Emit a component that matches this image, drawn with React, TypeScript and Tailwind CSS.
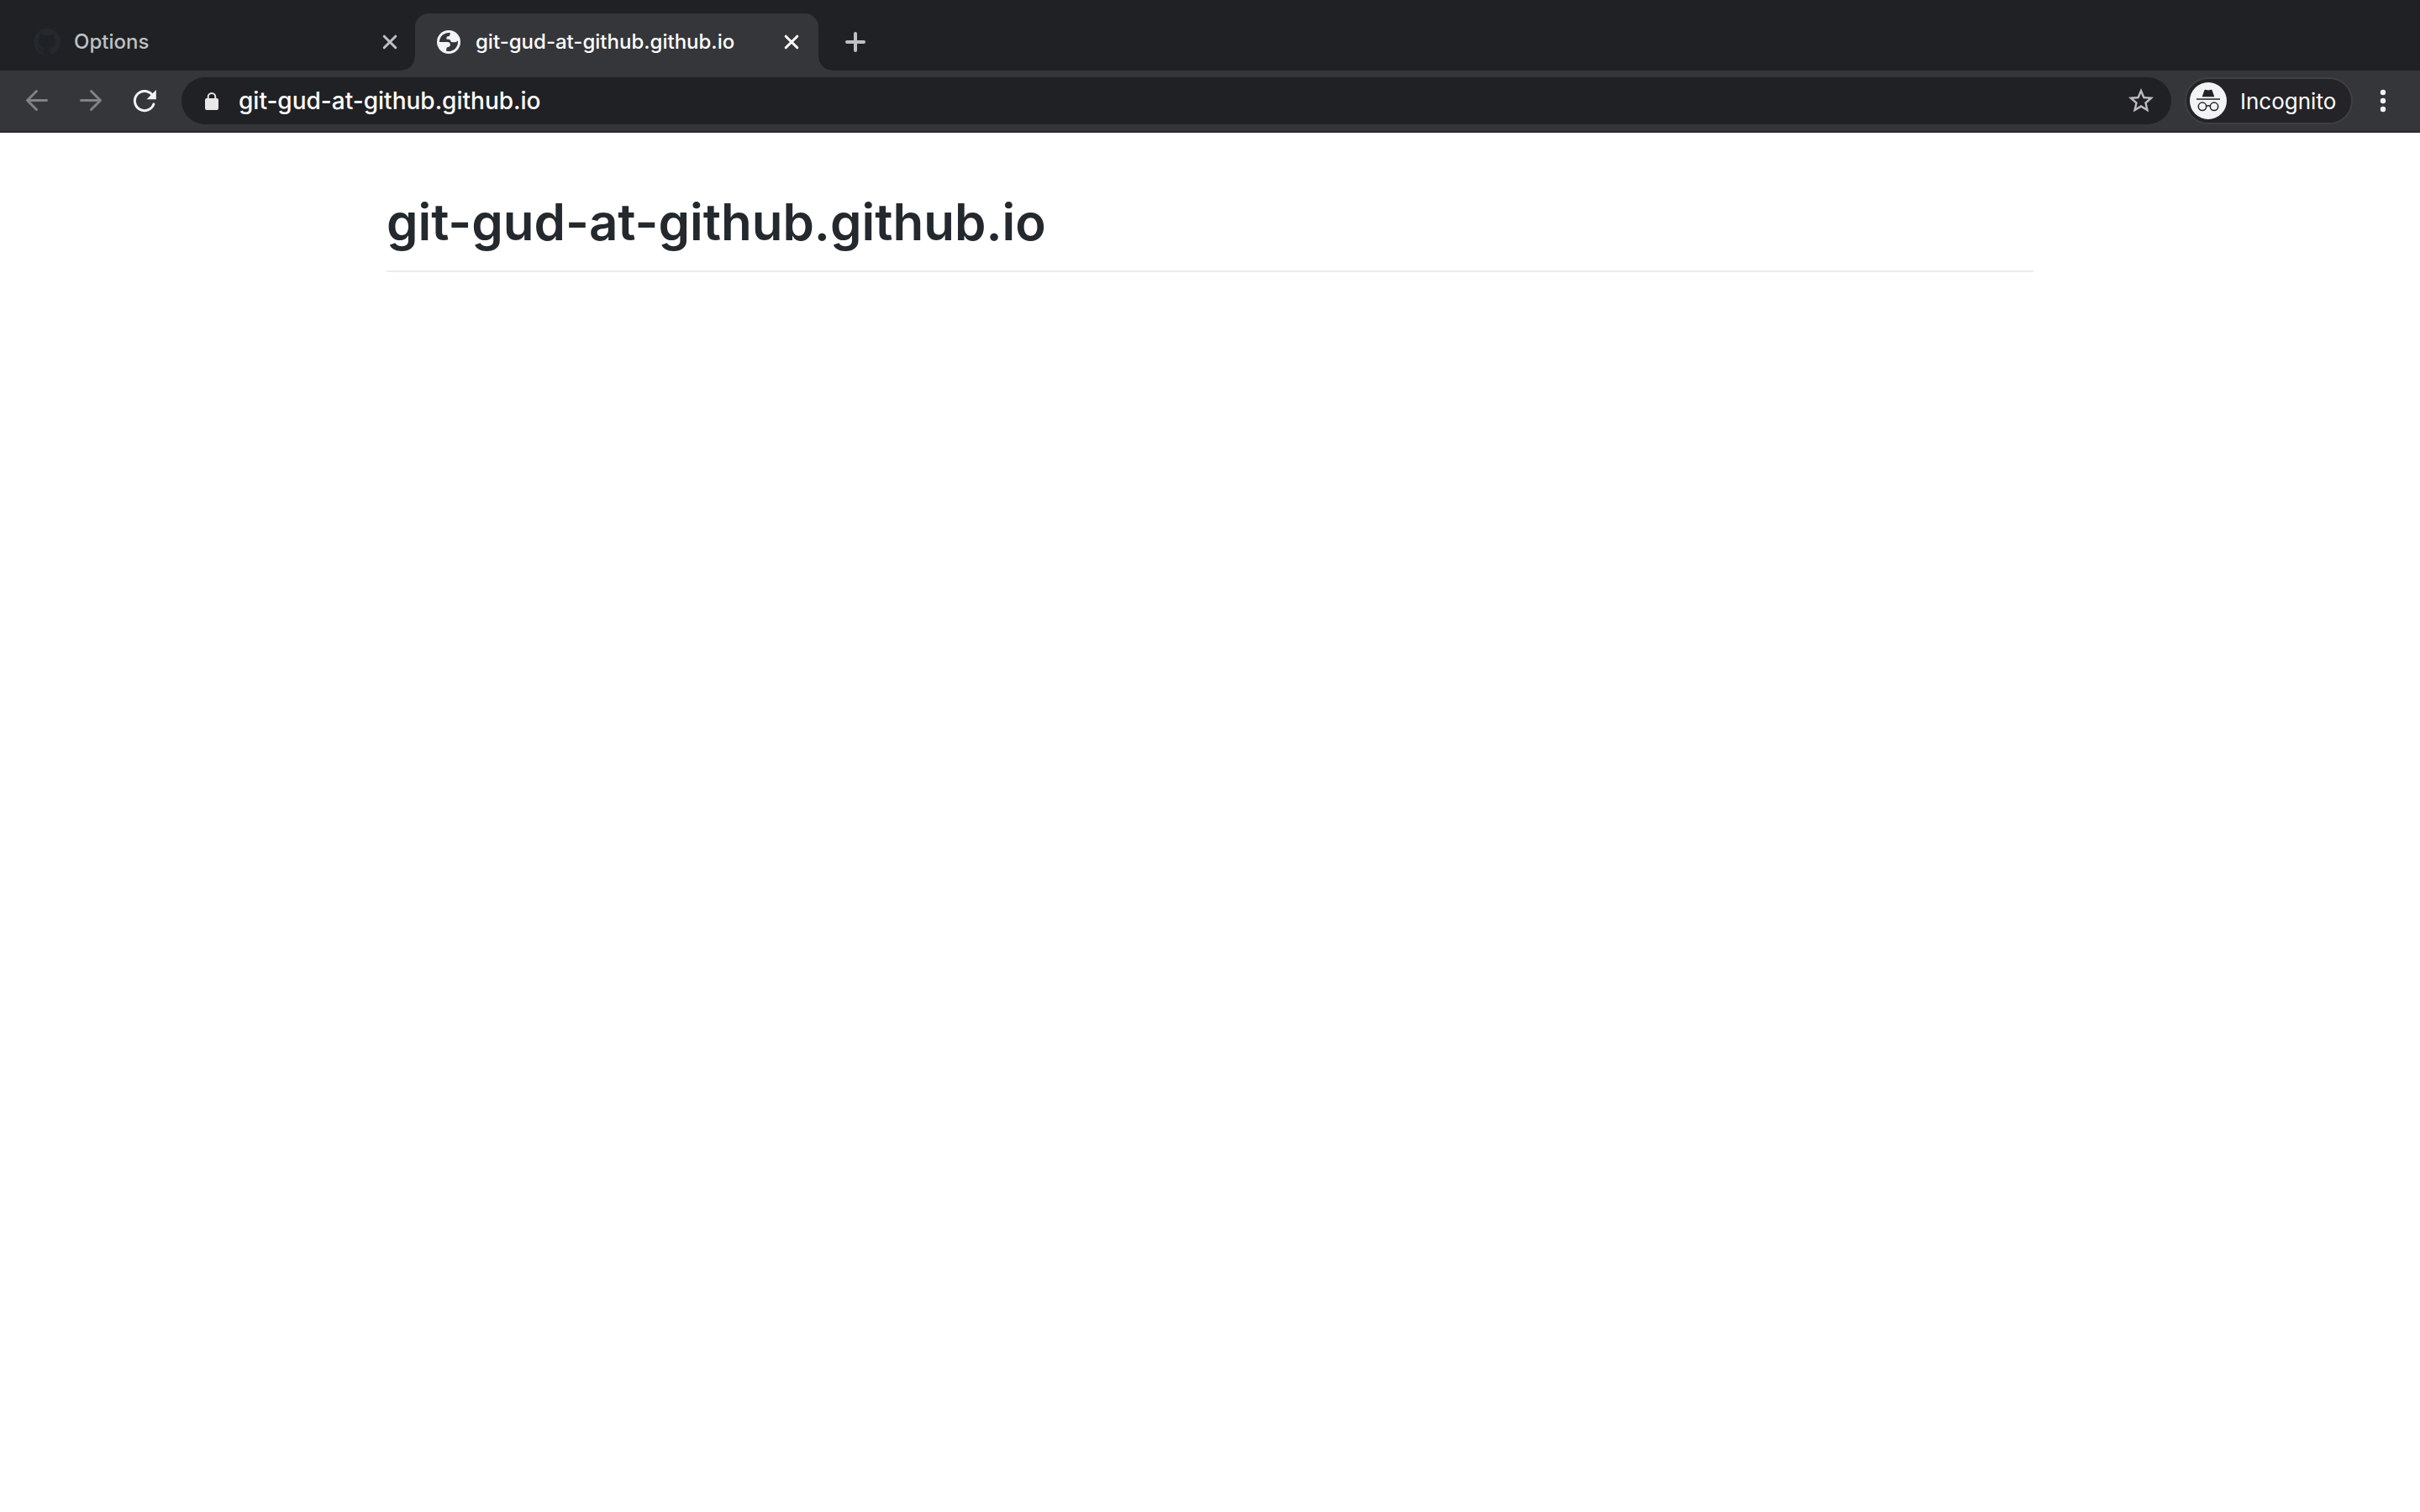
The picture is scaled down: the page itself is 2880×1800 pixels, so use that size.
import React from "react";

function CloseIcon() {
  return (
    <svg viewBox="0 0 20 20" className="size-5" fill="none" stroke="currentColor" strokeWidth="3" strokeLinecap="round" aria-hidden="true">
      <path d="M3.2 3.2 16.8 16.8M16.8 3.2 3.2 16.8" />
    </svg>
  );
}

function ArrowIcon({ flipped = false }: { flipped?: boolean }) {
  return (
    <svg viewBox="0 0 32 32" className="size-8" fill="none" stroke="currentColor" strokeWidth="3" strokeLinecap="round" strokeLinejoin="round" aria-hidden="true">
      <path d={flipped ? "M4.5 15.500H27M16.500 4.500 27.500 15.500 16.500 26.500" : "M27.500 15.500H5M15.500 4.500 4.500 15.500 15.500 26.500"} />
    </svg>
  );
}

function GithubIcon() {
  return (
    <svg viewBox="0 0 16 16" className="size-8 fill-[#24292e]" aria-hidden="true">
      <path d="M8 0C3.580 0 0 3.580 0 8c0 3.540 2.290 6.530 5.470 7.590.4.070.55-.17.55-.38 0-.19-.01-.82-.01-1.490-2.010.37-2.530-.49-2.690-.94-.09-.23-.48-.94-.82-1.130-.28-.15-.68-.52-.01-.53.63-.01 1.080.58 1.230.82.72 1.210 1.870.87 2.330.66.070-.52.28-.87.51-1.070-1.780-.2-3.640-.89-3.640-3.950 0-.87.31-1.590.82-2.150-.08-.2-.36-1.020.08-2.120 0 0 .67-.21 2.200.82.64-.18 1.320-.27 2-.27s1.360.09 2 .27c1.530-1.040 2.200-.82 2.200-.82.44 1.100.16 1.920.08 2.120.51.56.82 1.270.82 2.150 0 3.070-1.870 3.750-3.650 3.950.29.25.54.73.54 1.480 0 1.070-.01 1.930-.01 2.200 0 .21.15.46.55.38A8.010 8.010 0 0 0 16 8c0-4.420-3.580-8-8-8z" />
    </svg>
  );
}

function GlobeIcon() {
  return (
    <svg viewBox="0 0 32 32" className="size-8" aria-hidden="true">
      <circle cx="16" cy="16" r="14" fill="#f1f3f4" />
      <path
        d="M4.900 16A11.100 11.100 0 0 1 17.700 5.100V6.500Q17.500 9.200 15 9.300Q13.400 9.400 13.400 11V12.700H15.500Q18 12.800 18.300 14.800Q18.600 16.300 20.500 16.300H23.500Q25.600 16.200 26.900 14.200A11.100 11.100 0 0 1 13.200 26.700V24.200Q13.200 22.200 15 22Q17.800 21.800 17.900 19.300Q17.800 16.300 14.800 16Z"
        fill="#35363a"
      />
    </svg>
  );
}

function Tab({ title, icon, active = false }: { title: string; icon: React.ReactNode; active?: boolean }) {
  return (
    <div className={active ? "flex h-17 w-[480px] items-center rounded-t-2xl bg-[#35363a] pl-6 pr-5 text-white" : "flex h-17 w-[454px] items-center pr-4.5 text-[#bdc1c6]"}>
      <button type="button" role="tab" aria-selected={active} className="flex flex-1 items-center gap-4 text-left text-2xl font-medium">
        {icon}
        <span>{title}</span>
      </button>
      <button type="button" aria-label={"Close " + title} className="grid size-6 place-items-center">
        <CloseIcon />
      </button>
    </div>
  );
}

export default function App() {
  return (
    <div className="min-h-screen bg-white font-['Inter',sans-serif]">
      <header className="border-b-2 border-[#28292c] bg-[#35363a]">
        <div role="tablist" className="flex items-end bg-[#202124] pl-10 pt-4">
          <Tab title="Options" icon={<GithubIcon />} />
          <div className="relative h-4 w-0">
            <span className="absolute bottom-0 right-0 size-4 bg-[radial-gradient(circle_at_top_left,#202124_15px,#35363a_16px)]" />
          </div>
          <Tab active title="git-gud-at-github.github.io" icon={<GlobeIcon />} />
          <div className="relative h-4 w-0">
            <span className="absolute bottom-0 left-0 size-4 bg-[radial-gradient(circle_at_top_right,#202124_15px,#35363a_16px)]" />
          </div>
          <button type="button" aria-label="New tab" className="ml-7 grid h-17 w-8 place-items-center text-[#bdc1c6]">
            <svg viewBox="0 0 32 32" className="size-8" fill="none" stroke="currentColor" strokeWidth="4" strokeLinecap="round" aria-hidden="true">
              <path d="M6 16h20M16 6v20" />
            </svg>
          </button>
        </div>

        <div className="flex items-center py-2 pl-7">
          <nav aria-label="Browser navigation" className="flex items-center gap-8 text-[#818285]">
            <button type="button" aria-label="Back">
              <ArrowIcon />
            </button>
            <button type="button" aria-label="Forward">
              <ArrowIcon flipped />
            </button>
            <button type="button" aria-label="Reload" className="text-[#f1f3f4]">
              <svg viewBox="0 0 32 32" className="size-8" aria-hidden="true">
                <path d="M26.900 20A11.600 11.600 0 1 1 24.800 8.500" fill="none" stroke="currentColor" strokeWidth="3" strokeLinecap="round" />
                <path d="M29.800 3v11.300H18.500z" fill="currentColor" />
              </svg>
            </button>
          </nav>
          <form className="ml-7 flex h-14 flex-1 items-center rounded-full bg-[#202124] pl-6 pr-4.5">
            <svg viewBox="0 0 24 24" className="size-6 text-[#e8e8e8]" aria-hidden="true">
              <rect x="4" y="9" width="16" height="14" rx="2" fill="currentColor" />
              <path d="M7.700 10V7.300a4.300 4.300 0 0 1 8.600 0V10" fill="none" stroke="currentColor" strokeWidth="2" />
            </svg>
            <input aria-label="Address" defaultValue="git-gud-at-github.github.io" className="ml-5 min-w-0 flex-1 bg-transparent text-[28px] font-medium leading-10 text-white outline-none" />
            <button type="button" aria-label="Bookmark this page" className="text-[#bdbdbd]">
              <svg viewBox="0 0 24 24" className="size-9" fill="currentColor" aria-hidden="true">
                <path d="M22 9.240l-7.190-.62L12 2 9.190 8.630 2 9.240l5.460 4.730L5.820 21 12 17.270 18.180 21l-1.630-7.030L22 9.240zM12 15.400l-3.760 2.270 1-4.280-3.320-2.880 4.380-.38L12 6.100l1.710 4.040 4.380.38-3.320 2.880 1 4.280L12 15.400z" />
              </svg>
            </button>
          </form>
          <button type="button" className="ml-4 flex h-14 w-[200px] items-center gap-4 rounded-full border-2 border-[#3f4043] bg-[#242328] pl-1 text-[26px] text-white">
            <svg viewBox="0 0 44 44" className="size-11" aria-hidden="true">
              <circle cx="22" cy="22" r="22" fill="#f1f3f4" />
              <path d="M14.700 17.200 17.300 9.700Q17.700 8.500 18.900 8.800L22 9.600 25.100 8.800Q26.300 8.500 26.700 9.700L29.300 17.200Z" fill="#242328" />
              <path d="M8 19.300h28v1.500H8z" fill="#242328" />
              <g fill="none" stroke="#242328" strokeWidth="1.5">
                <circle cx="15" cy="28.800" r="4.700" />
                <circle cx="29" cy="28.800" r="4.700" />
                <path d="M19.600 28.500q2.400-1.600 4.800 0" />
              </g>
            </svg>
            <span>Incognito</span>
          </button>
          <button type="button" aria-label="Menu" className="ml-5 mr-7 text-[#f1f3f4]">
            <svg viewBox="0 0 32 32" className="size-8" fill="currentColor" aria-hidden="true">
              <circle cx="16" cy="6" r="3.200" />
              <circle cx="16" cy="16" r="3.200" />
              <circle cx="16" cy="26" r="3.200" />
            </svg>
          </button>
        </div>
      </header>

      <main className="mx-auto max-w-[2040px] px-10 pt-16.5">
        <h1 className="border-b-2 border-[#eaecef] pb-4.5 text-6xl/20 font-semibold text-[#24292e]">git-gud-at-github.github.io</h1>
      </main>
    </div>
  );
}
